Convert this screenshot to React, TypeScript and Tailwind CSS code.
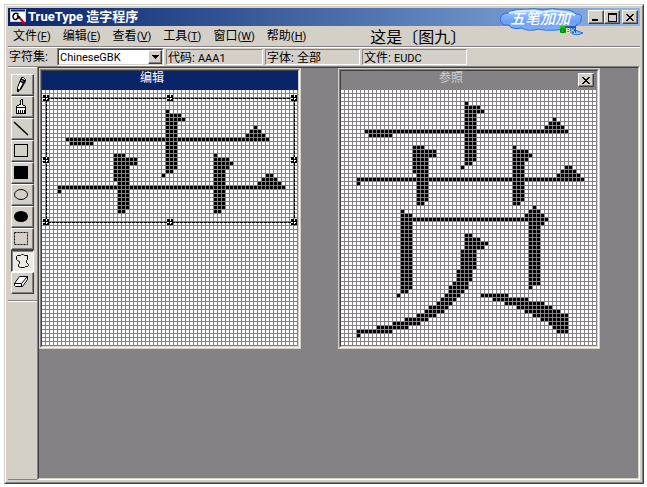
import { useState, type ReactNode } from 'react';

// [row, first column, last column] in the 64x64 cell grid
type Run = [number, number, number];

const column = (from: number, to: number, left: number, right: number): Run[] =>
  Array.from({ length: to - from + 1 }, (_, i) => [from + i, left, right]);

const GRASS: Run[] = [
  [3, 31, 31],
  [4, 31, 34],
  [5, 31, 35],
  ...column(6, 17, 31, 33),
  [18, 31, 32],
  [19, 30, 30],
  [7, 53, 53],
  [8, 52, 54],
  [9, 51, 55],
  [10, 6, 56],
  [11, 7, 12],
  [14, 18, 20],
  ...column(15, 16, 18, 23),
  ...column(17, 20, 18, 21),
  ...column(21, 27, 19, 21),
  [28, 19, 20],
  [14, 43, 43],
  [15, 43, 46],
  [16, 43, 47],
  [17, 43, 46],
  ...column(18, 27, 43, 45),
  [28, 43, 44],
  [19, 56, 57],
  [20, 55, 58],
  [21, 54, 59],
  [22, 4, 60],
  [23, 4, 4],
];

const SHELL: Run[] = [
  [30, 15, 15],
  ...column(31, 49, 15, 17),
  [50, 15, 16],
  [51, 14, 14],
  [29, 48, 48],
  [30, 47, 49],
  [31, 46, 50],
  [32, 15, 51],
  [33, 47, 50],
  ...column(34, 48, 47, 49),
  [49, 47, 47],
  [36, 31, 32],
  [37, 31, 34],
  [38, 31, 36],
  [39, 31, 35],
  ...column(40, 44, 30, 33),
  ...column(45, 47, 29, 32),
  [48, 28, 31],
  [49, 27, 31],
  [50, 27, 30],
  [51, 26, 29],
  [52, 25, 28],
  [53, 24, 27],
  [54, 22, 26],
  [55, 21, 25],
  [56, 19, 23],
  [57, 16, 21],
  [58, 13, 19],
  [59, 9, 16],
  [60, 4, 12],
  [61, 4, 4],
  [51, 35, 41],
  [52, 38, 46],
  [53, 41, 50],
  [54, 44, 52],
  [55, 46, 54],
  [56, 48, 56],
  [57, 50, 56],
  [58, 52, 56],
  [59, 53, 56],
  [60, 54, 56],
];

const EDIT_GLYPH = GRASS.map(([row, a, b]): Run => [row + 2, a, b]);
const REFERENCE_GLYPH = [...GRASS, ...SHELL];

const MENUS = [
  { label: '文件', hotkey: 'F' },
  { label: '编辑', hotkey: 'E' },
  { label: '查看', hotkey: 'V' },
  { label: '工具', hotkey: 'T' },
  { label: '窗口', hotkey: 'W' },
  { label: '帮助', hotkey: 'H' },
];

const TOOLS: { name: string; icon: ReactNode }[] = [
  {
    name: '铅笔',
    icon: (
      <g>
        <path d="M9.5 2.5h2l2 2v2l-5 8-3 2v-4z" fill="#fff" stroke="#000" />
        <path d="M13 5l-5 10M9 4l4 2M8 6l4 2" stroke="#000" strokeWidth="1.5" />
        <path d="M5 14h2v3H5z" fill="#000" />
      </g>
    ),
  },
  {
    name: '刷子',
    icon: (
      <g shapeRendering="crispEdges">
        <path d="M8.5 7.5v-4l1-1h1v5l3 2v7h-9v-7l3-2z" fill="#fff" stroke="#000" />
        <path d="M4 10.5h10M6.5 13v4M8.5 13v4M10.5 13v4M12.5 13v4" stroke="#000" />
      </g>
    ),
  },
  { name: '直线', icon: <path d="M2 3l14 13" stroke="#000" strokeWidth="1.5" /> },
  { name: '空心矩形', icon: <rect x="2.5" y="3.5" width="13" height="12" fill="none" stroke="#000" /> },
  { name: '实心矩形', icon: <rect x="2" y="3" width="14" height="13" fill="#000" /> },
  { name: '空心椭圆', icon: <ellipse cx="9" cy="9.5" rx="6.5" ry="5" fill="none" stroke="#000" /> },
  { name: '实心椭圆', icon: <ellipse cx="9" cy="9.5" rx="7" ry="5.5" fill="#000" /> },
  {
    name: '矩形选定',
    icon: <rect x="2.5" y="3.5" width="13" height="12" fill="none" stroke="#000" strokeDasharray="2 1" />,
  },
  {
    name: '任意形状选定',
    icon: (
      <path
        d="M4.5 5.5l1-1h3l1-1h2l1 1h3v4l-1 1v2l2 2v1l-1 1h-2l-1 1h-4l-2-1v-2l1-1v-2l-2-1-1-1z"
        fill="none"
        stroke="#000"
      />
    ),
  },
  {
    name: '橡皮擦',
    icon: (
      <g>
        <path d="M2.5 10.5l5-7h8v3l-5 7h-7l-1-1z" fill="#fff" stroke="#000" />
        <path d="M2.5 10.5h7l6-7M9.500 10.5v3" fill="none" stroke="#000" />
      </g>
    ),
  },
];

const RAISED =
  'border border-t-white border-l-white border-r-[#404040] border-b-[#404040] bg-[#d4d0c8] shadow-[inset_-1px_-1px_0_#848284]';

function GlyphGrid({ runs, label, selected }: { runs: Run[]; label: string; selected?: boolean }) {
  return (
    <svg
      className="block"
      width="256"
      height="256"
      viewBox="0 0 256 256"
      shapeRendering="crispEdges"
      role="img"
      aria-label={label}
    >
      <rect width="256" height="256" fill="#848284" />
      {Array.from({ length: 64 }, (_, row) => (
        <path key={row} d={`M0 ${row * 4 + 1.5}H256`} stroke="#fff" strokeWidth="3" strokeDasharray="3 1" />
      ))}
      {runs.map(([row, a, b]) => (
        <path
          key={`${row}-${a}`}
          d={`M${a * 4} ${row * 4 + 1.5}H${b * 4 + 3}`}
          stroke="#000"
          strokeWidth="3"
          strokeDasharray="3 1"
        />
      ))}
      {selected && <SelectionFrame />}
    </svg>
  );
}

function SelectionFrame() {
  return (
    <g>
      <rect x="4.5" y="8.5" width="248" height="124" fill="none" stroke="#848284" />
      <rect x="4.5" y="8.5" width="248" height="124" fill="none" stroke="#000" strokeDasharray="3 1" />
      {[4, 128, 252].map((x) =>
        [8, 70, 132].map((y) =>
          x === 128 && y === 70 ? null : (
            <g key={`${x}-${y}`}>
              <rect x={x - 3} y={y - 3} width="6" height="6" fill="#000" />
              <path d={`M${x - 3} ${y + 0.5}h6M${x + 0.5} ${y - 3}v6`} stroke="#fff" strokeDasharray="2 1" />
            </g>
          ),
        ),
      )}
    </g>
  );
}

function CloseGlyph() {
  return (
    <svg width="8" height="7" viewBox="0 0 8 7" shapeRendering="crispEdges" aria-hidden="true">
      <path
        d="M0 0h2v1h1v1h2V1h1V0h2v1H7v1H6v1H5v1h1v1h1v1h1v1H6V6H5V5H3v1H2v1H0V6h1V5h1V4h1V3H2V2H1V1H0z"
        fill="#000"
      />
    </svg>
  );
}

function CaptionButton({ label, children }: { label: string; children: ReactNode }) {
  return (
    <button type="button" aria-label={label} className={`flex h-3.5 w-4 items-center justify-center ${RAISED}`}>
      {children}
    </button>
  );
}

function GlyphWindow({ title, active, children }: { title: string; active?: boolean; children: ReactNode }) {
  return (
    <section className="shrink-0 border border-[#d4d0c8]">
      <div className="border border-t-[#848284] border-l-[#848284] border-r-white border-b-white">
        <div className="border border-t-[#404040] border-l-[#404040] border-r-[#d4d0c8] border-b-[#d4d0c8]">
          <header
            className={`flex h-[19px] justify-between pr-[3px] pl-[98px] ${
              active ? 'bg-[#0a246a] text-white' : 'bg-[#848284] text-[#d4d0c8]'
            }`}
          >
            <h2 className="leading-[14px]">{title}</h2>
            {!active && (
              <div className="pt-0.5">
                <CaptionButton label="关闭">
                  <CloseGlyph />
                </CaptionButton>
              </div>
            )}
          </header>
          {children}
        </div>
      </div>
    </section>
  );
}

function AppIcon() {
  return (
    <svg width="17" height="16" viewBox="0 0 17 16" aria-hidden="true">
      <rect x="0.5" y="0.5" width="15" height="12" fill="#fff" stroke="#d4d0c8" />
      <path d="M1 1.5h14" stroke="#0a246a" strokeWidth="2" />
      <path d="M8.5 5Q4 3 3 7Q3 11 6 10.5Q9 9 7.5 6L8 10" fill="none" stroke="#000" strokeWidth="1.5" />
      <path d="M8 7l7 8" stroke="#c00018" strokeWidth="2" />
      <path d="M8 7l2 2" stroke="#000" strokeWidth="1.5" />
    </svg>
  );
}

function ImeBadge() {
  return (
    <svg
      className="absolute top-0 right-14"
      width="85"
      height="29"
      viewBox="0 0 85 29"
      role="img"
      aria-label="五笔加加 GBK"
    >
      <defs>
        <linearGradient id="cloud" x1="0" y1="0" x2="0" y2="1">
          <stop offset="0" stopColor="#a5cfff" />
          <stop offset="0.5" stopColor="#6b9ef7" />
          <stop offset="1" stopColor="#8cbcff" />
        </linearGradient>
      </defs>
      <path
        d="M1 11Q3 5 9 5Q15 0 25 2Q35-1 44 2Q54-1 62 2Q73 1 77 6Q84 6 82 11Q83 15 77 17L76 22L84 25Q76 29 71 24Q66 20 58 22Q46 23 40 21Q29 24 23 20Q12 22 10 17Q2 18 1 11Z"
        fill="url(#cloud)"
        stroke="#2c70df"
      />
      <path d="M10 5Q26 1 43 4Q61 1 76 7" fill="none" stroke="#d4edff" strokeWidth="2" />
      <text
        x="11"
        y="16"
        fontSize="15"
        fontStyle="italic"
        fontWeight="500"
        fill="#fff"
        fontFamily="'Noto Sans CJK SC', sans-serif"
      >
        五笔加加
      </text>
      <rect x="61" y="18" width="16" height="7" fill="#2455b8" />
      <rect x="61" y="18" width="5" height="7" fill="#00d020" />
      <text x="61" y="25" fontSize="7" fontWeight="700" fontFamily="'Liberation Sans', sans-serif">
        <tspan fill="#006010">G</tspan>
        <tspan fill="#ffff9c">B</tspan>
        <tspan fill="#77ddff">K</tspan>
      </text>
    </svg>
  );
}

function StatusField({ label, value, className }: { label: string; value: ReactNode; className: string }) {
  return (
    <p
      className={`h-4 border border-t-[#848284] border-l-[#848284] border-r-white border-b-white pl-px leading-4 whitespace-nowrap ${className}`}
    >
      {label}: {value}
    </p>
  );
}

export default function App() {
  const [tool, setTool] = useState('任意形状选定');
  const [charset, setCharset] = useState('ChineseGBK');

  return (
    <div className="flex min-h-screen flex-col bg-white pt-1 pr-[3px] pb-[3px] pl-1 [font-family:Roboto,'Noto_Sans_CJK_SC',sans-serif] text-[12px] text-black">
      <div className="flex grow flex-col border border-t-[#d4d0c8] border-l-[#d4d0c8] border-r-[#404040] border-b-[#404040]">
        <div className="flex grow flex-col border border-t-white border-l-white border-r-[#848284] border-b-[#848284] bg-[#d4d0c8] p-0.5">
          <header className="relative flex h-[18px] items-center justify-between bg-linear-to-r from-[#0a246a] to-[#8fb4e6] pr-0.5 pl-0.5">
            <div className="flex items-center gap-px">
              <AppIcon />
              <h1 className="text-[13px] leading-4 font-bold text-white">TrueType 造字程序</h1>
            </div>
            <div className="flex">
              <CaptionButton label="最小化">
                <svg width="8" height="7" viewBox="0 0 8 7" aria-hidden="true">
                  <path d="M0 5h6v2H0z" fill="#000" />
                </svg>
              </CaptionButton>
              <CaptionButton label="最大化">
                <svg width="9" height="9" viewBox="0 0 9 9" shapeRendering="crispEdges" aria-hidden="true">
                  <path d="M0 0h9v9H0zM1 2v6h7V2z" fill="#000" fillRule="evenodd" />
                </svg>
              </CaptionButton>
              <div className="pl-0.5">
                <CaptionButton label="关闭">
                  <CloseGlyph />
                </CaptionButton>
              </div>
            </div>
            <ImeBadge />
          </header>

          <div className="flex h-[21px] items-center border-b border-[#848284]">
            <nav className="flex items-center gap-3 pl-[5px]">
              {MENUS.map(({ label, hotkey }) => (
                <button key={hotkey} type="button" className="leading-4 whitespace-nowrap">
                  {label}
                  <span className="text-[11px]">
                    (<span className="underline underline-offset-1">{hotkey}</span>)
                  </span>
                </button>
              ))}
            </nav>
            <p className="pl-16 text-[16px] leading-4 whitespace-nowrap [font-family:'Noto_Sans_CJK_SC',sans-serif]">
              这是〔图九〕
            </p>
          </div>

          <div className="flex h-[19px] items-center gap-0.5 border-t border-white pl-px">
            <label htmlFor="charset" className="w-[46px] leading-4 whitespace-nowrap">
              字符集:
            </label>
            <div className="relative h-[18px] w-[107px] border border-t-[#848284] border-l-[#848284] border-r-white border-b-white">
              <select
                id="charset"
                value={charset}
                onChange={(e) => setCharset(e.target.value)}
                className="block h-4 w-full appearance-none border border-t-[#404040] border-l-[#404040] border-r-[#d4d0c8] border-b-[#d4d0c8] bg-white pt-px pl-px text-[11px] leading-[13px]"
              >
                <option>ChineseGBK</option>
                <option>Unicode</option>
              </select>
              <span
                className={`pointer-events-none absolute top-px right-px flex h-3.5 w-3.5 items-center justify-center ${RAISED}`}
              >
                <svg width="7" height="4" viewBox="0 0 7 4" shapeRendering="crispEdges" aria-hidden="true">
                  <path d="M0 0h7v1H6v1H5v1H4v1H3V3H2V2H1V1H0z" fill="#000" />
                </svg>
              </span>
            </div>
            <StatusField label="代码" value={<span className="text-[11px]">AAA1</span>} className="w-[97px]" />
            <StatusField label="字体" value="全部" className="w-[95px]" />
            <StatusField label="文件" value={<span className="text-[11px]">EUDC</span>} className="w-[105px]" />
          </div>

          <div className="flex grow">
            <aside className="w-[29px] shrink-0 border-t border-b border-t-[#848284] border-b-[#848284]">
              <div className="border-t border-white px-[3px] pt-1.5">
                {TOOLS.map(({ name, icon }) => (
                  <button
                    key={name}
                    type="button"
                    title={name}
                    aria-label={name}
                    aria-pressed={tool === name}
                    onClick={() => setTool(name)}
                    className={`block h-[22px] w-[23px] ${
                      tool === name
                        ? 'border border-t-[#404040] border-l-[#404040] border-r-white border-b-white bg-[#ecebe6] shadow-[inset_1px_1px_0_#848284]'
                        : RAISED
                    }`}
                  >
                    <svg width="21" height="20" viewBox="0 0 21 20" fill="none" aria-hidden="true">
                      {icon}
                    </svg>
                  </button>
                ))}
              </div>
              <div className="mt-1.5 h-0.5 border-t border-b border-t-[#848284] border-b-white" />
            </aside>

            <main className="grow border border-t-[#848284] border-l-[#848284] border-r-white border-b-white">
              <div className="flex h-full items-start gap-[37px] border border-t-[#404040] border-l-[#404040] border-r-[#d4d0c8] border-b-[#d4d0c8] bg-[#848284]">
                <GlyphWindow title="编辑" active>
                  <GlyphGrid runs={EDIT_GLYPH} label="正在编辑的字形" selected />
                </GlyphWindow>
                <GlyphWindow title="参照">
                  <GlyphGrid runs={REFERENCE_GLYPH} label="参照字形" />
                </GlyphWindow>
              </div>
            </main>
          </div>
        </div>
      </div>
    </div>
  );
}
